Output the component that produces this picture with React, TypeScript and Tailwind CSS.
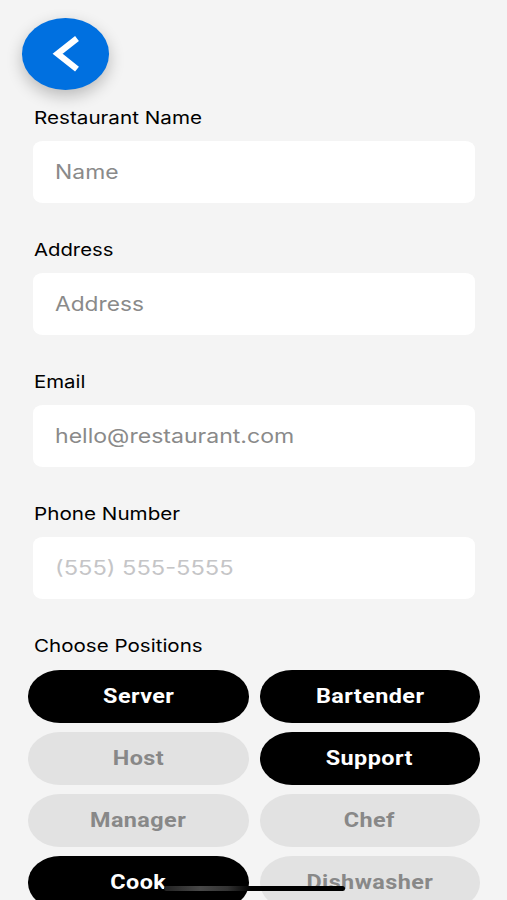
import React from "react";

const fields = [
  { label: "Restaurant Name", labelWidth: "scale-x-[1.18]", hint: "Name", tone: "scale-x-[1.175] text-[#8a8a8a]" },
  { label: "Address", labelWidth: "scale-x-[1.16]", hint: "Address", tone: "scale-x-[1.165] text-[#8a8a8a]" },
  { label: "Email", labelWidth: "scale-x-[1.165]", hint: "hello@restaurant.com", tone: "scale-x-[1.183] text-[#8a8a8a]" },
  { label: "Phone Number", labelWidth: "scale-x-[1.18]", hint: "(555) 555-5555", tone: "scale-x-[1.213] text-[#c5c5c7]" },
];

const positions = [
  { name: "Server", selected: true },
  { name: "Bartender", selected: true },
  { name: "Host", selected: false },
  { name: "Support", selected: true },
  { name: "Manager", selected: false },
  { name: "Chef", selected: false },
  { name: "Cook", selected: true },
  { name: "Dishwasher", selected: false },
];

function Label({ children, width }: { children: React.ReactNode; width: string }) {
  return (
    <div className="flex h-6 items-center pt-[2px] pl-[33.5px]">
      <span className={`origin-left whitespace-nowrap text-[17.5px] leading-[22px] text-black ${width}`}>
        {children}
      </span>
    </div>
  );
}

export default function App() {
  return (
    <main className="relative h-[900px] w-[507px] overflow-hidden bg-[#f4f4f4] font-['Inter','Liberation_Sans',sans-serif]">
      <header className="pt-[18.4px] pl-[22.4px]">
        <button
          aria-label="Back"
          className="flex h-[71.2px] w-[86.5px] items-center justify-center rounded-[50%] bg-[#0070e0] shadow-[0_6px_16px_rgba(0,0,0,0.24)]"
        >
          <svg width="86" height="71" viewBox="0 0 86 71" fill="none" stroke="white" strokeWidth="6.2">
            <path d="M54 20.5 L34.6 35.7 L54 51.1" />
          </svg>
        </button>
      </header>

      <form className="mt-[15.4px] flex flex-col gap-[34px]">
        {fields.map((f) => (
          <div key={f.label} className="h-[98px]">
            <Label width={f.labelWidth}>{f.label}</Label>
            <div className="mt-[12.4px] mr-8 ml-[33px] flex h-[61.5px] items-center rounded-[10px/8px] bg-white pl-[22px]">
              <span className={`origin-left whitespace-nowrap text-[19.5px] leading-7 ${f.tone}`}>{f.hint}</span>
            </div>
          </div>
        ))}
      </form>

      <section className="mt-[34px]">
        <Label width="scale-x-[1.175]">Choose Positions</Label>
        <div className="mt-[13px] mr-[27px] ml-7 grid grid-cols-2 gap-x-[11px] gap-y-[9.3px] font-['Roboto',sans-serif]">
          {positions.map((p) => (
            <button
              key={p.name}
              className={`flex h-[52.7px] items-center justify-center rounded-[32px/26.35px] ${
                p.selected ? "bg-black text-white" : "bg-[#e2e2e2] text-[#888]"
              }`}
            >
              <span className="scale-x-[1.2] pt-px text-[19.5px] leading-6 font-bold tracking-[0.35px]">{p.name}</span>
            </button>
          ))}
        </div>
      </section>

      <div className="absolute top-[885.5px] left-[164px] h-[5.5px] w-[181px] rounded-full bg-[linear-gradient(90deg,#222_0%,#484848_20%,#333_35%,#000_48%,#000_100%)]" />
    </main>
  );
}
